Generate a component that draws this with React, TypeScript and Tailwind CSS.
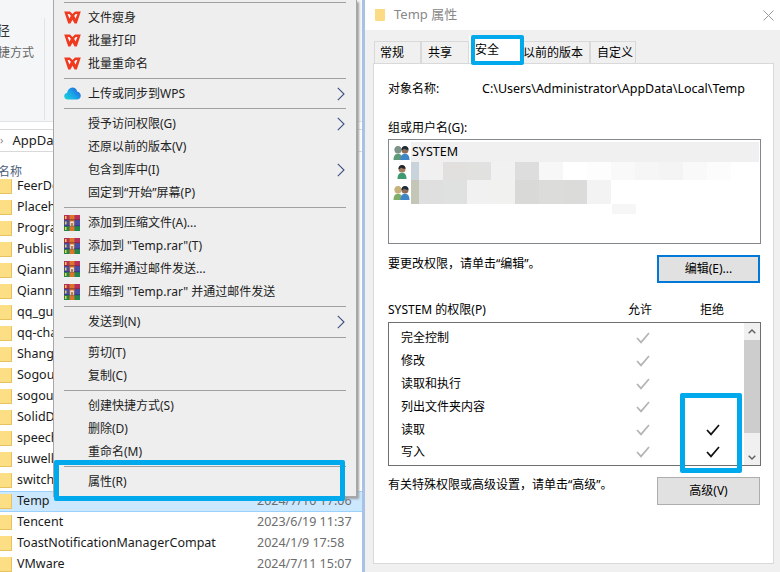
import React from "react";

const font = "font-['Noto_Sans','Noto_Sans_CJK_SC',sans-serif]";

function Wps() {
  return (
    <svg width="17" height="13" viewBox="0 0 17 13" className="shrink-0">
      <path d="M0.2 0.6H6L8.5 3L11 0.6H16.8L12.8 12.6H10.6L8.5 8.8L6.4 12.6H4.2Z" fill="#f03a20" />
      <path d="M3.6 2.9H5.2L6.8 4.8L5.5 7.5Z M13.4 2.9H11.8L10.2 4.8L11.5 7.5Z" fill="#fff" />
    </svg>
  );
}

function Cloud() {
  return (
    <svg width="17" height="13" viewBox="0 0 17 13" className="shrink-0">
      <defs>
        <linearGradient id="cl" x1="0" y1="1" x2="1" y2="0.3">
          <stop offset="0" stopColor="#1fd6d2" />
          <stop offset="0.55" stopColor="#18a4ea" />
          <stop offset="1" stopColor="#2468d8" />
        </linearGradient>
      </defs>
      <path d="M3.6 12.5C1.6 12.5 0.2 11 0.2 9.2C0.2 7.5 1.4 6.2 3 6C3.6 2.8 5.8 0.6 8.4 0.6C10.8 0.6 12.6 2.2 13.2 4.6C15.2 5 16.8 6.6 16.8 8.7C16.8 10.9 15 12.5 12.8 12.5Z" fill="url(#cl)" />
    </svg>
  );
}

function Rar() {
  return (
    <svg width="16" height="16" viewBox="0 0 16 16" className="shrink-0">
      <rect x="0" y="0" width="16" height="5" fill="#b92f5c" />
      <rect x="0" y="5" width="16" height="6" fill="#454fa8" />
      <rect x="0" y="11" width="16" height="5" fill="#23864a" />
      <rect x="5.5" y="0" width="5" height="16" fill="#d9762a" />
      <rect x="0" y="4.5" width="16" height="0.7" fill="#70243c" />
      <rect x="0" y="10.5" width="16" height="0.7" fill="#2a2f70" />
      <rect x="1" y="1" width="1.5" height="3" fill="#f3d23c" />
      <rect x="1" y="6.5" width="1.5" height="3" fill="#f3d23c" />
      <rect x="1" y="12" width="1.5" height="3" fill="#f3d23c" />
      <rect x="6.3" y="6.5" width="3.4" height="4.5" fill="#f6eee0" />
      <rect x="7.4" y="8" width="1.2" height="3" fill="#7a3a16" />
    </svg>
  );
}

function Person({ skin, hair, body }: { skin: string; hair: string; body: string }) {
  return (
    <g>
      <path d="M0.5 15C0.5 10.8 2.2 8.8 5 8.8C7.8 8.8 9.5 10.8 9.5 15Z" fill={body} />
      <circle cx="5" cy="5" r="3.5" fill={skin} />
      <path d="M1.5 5.2C1.3 2.6 3 1 5 1C7 1 8.7 2.6 8.5 4.8C6.6 4.8 5 4.2 4 3.4C3.6 4.2 2.8 5 1.5 5.2Z" fill={hair} />
    </g>
  );
}

function TwoUsers({ a, c }: { a: string; c: string }) {
  return (
    <svg width="17" height="15" viewBox="0 0 17 15" className="shrink-0">
      <Person skin={a} hair={a} body={c} />
      <g transform="translate(7,0)">
        <Person skin="#8c6f5a" hair="#1e2a36" body="#3f86c8" />
      </g>
    </svg>
  );
}

function OneUser() {
  return (
    <svg width="10" height="15" viewBox="0 0 10 15" className="shrink-0">
      <Person skin="#a97f63" hair="#20262c" body="#3f9a72" />
    </svg>
  );
}

function Chevron() {
  return (
    <svg width="8" height="14" viewBox="0 0 8 14" className="shrink-0">
      <path d="M0.8 0.8L7 7L0.8 13.2" fill="none" stroke="#3d4f84" strokeWidth="1.1" />
    </svg>
  );
}

function Check({ color }: { color: string }) {
  return (
    <svg width="14" height="12" viewBox="0 0 14 12" className="shrink-0">
      <path d="M1 6L5 10.4L13 1" fill="none" stroke={color} strokeWidth="1.7" />
    </svg>
  );
}

function Folder() {
  return (
    <div className="w-[12px] h-[15px] shrink-0 bg-[#fcdf85] border-r border-b border-[#e6c35f] rounded-br-[1px]" />
  );
}

const Sep = () => (
  <div className="h-[7px] flex items-center px-[10px]">
    <div className="h-px w-full bg-[#a0a0a0]" />
  </div>
);

function Item({ icon, label, arrow }: { icon?: React.ReactNode; label: string; arrow?: boolean }) {
  return (
    <div className="h-[23px] flex items-center pl-[10px] pr-[11px]">
      <div className="w-[24px] flex items-center">{icon}</div>
      <span className="text-[12px] text-[#222] whitespace-nowrap flex-1">{label}</span>
      {arrow ? <Chevron /> : null}
    </div>
  );
}

const files: { n: string; d?: string; sel?: boolean }[] = [
  { n: "FeerDownload" },
  { n: "Placeholder" },
  { n: "Programs" },
  { n: "Publishers" },
  { n: "Qianniu" },
  { n: "QianniuBak" },
  { n: "qq_guild" },
  { n: "qq-chat" },
  { n: "Shanghai" },
  { n: "SogouInput" },
  { n: "sogou" },
  { n: "SolidDocs" },
  { n: "speech" },
  { n: "suwell" },
  { n: "switch" },
  { n: "Temp", d: "2024/7/10 17:06", sel: true },
  { n: "Tencent", d: "2023/6/19 11:37" },
  { n: "ToastNotificationManagerCompat", d: "2024/1/9 17:58" },
  { n: "VMware", d: "2024/7/11 15:07" },
];

function Explorer() {
  return (
    <div className="w-[362px] shrink-0 flex flex-col bg-white overflow-hidden">
      <div className="h-[122px] shrink-0 bg-[#f5f6f7] border-b border-[#e2e3e4] flex">
        <div className="w-[44px] flex flex-col pt-[21px]">
          <span className="text-[13px] text-[#333] leading-[18px] -ml-[3px] w-[16px] overflow-hidden">径</span>
          <span className="text-[12px] text-[#666] leading-[18px] mt-[5px] whitespace-nowrap -ml-[2px]">捷方式</span>
        </div>
        <div className="w-px h-[102px] mt-[18px] bg-[#e2e3e4]" />
      </div>
      <div className="h-[7px] shrink-0 bg-white" />
      <div className="h-[23px] shrink-0 border-y border-[#d9d9d9] flex items-center gap-[9px] text-[13px] text-[#222]">
        <span className="text-[#888] text-[11px]">›</span>
        <span>AppData</span>
      </div>
      <div className="h-[16px] mt-[12px] -mb-[4px] shrink-0 flex items-center text-[12px] text-[#4c607a] -ml-[2px]">名称</div>
      <div className="flex flex-col">
        {files.map((f) => (
          <div
            key={f.n}
            className={
              f.sel
                ? "h-[21px] shrink-0 flex items-center bg-[#cce8ff] border-y border-[#99d1ff]"
                : "h-[21px] shrink-0 flex items-center"
            }
          >
            <Folder />
            <span className="ml-[5px] w-[240px] text-[12.5px] text-[#1a1a1a] whitespace-nowrap">{f.n}</span>
            <span className="text-[12.5px] text-[#6d6d6d] whitespace-nowrap">{f.d}</span>
          </div>
        ))}
      </div>
    </div>
  );
}

function ContextMenu() {
  return (
    <div className="absolute left-[53px] top-0 w-[304px] h-[497px] bg-[#eeeeee] border-l border-r border-b border-[#a8a8a8] shadow-[2px_2px_2px_#a0a0a0]">
      <div className="h-[6px] flex items-start pt-[2px] px-[10px]">
        <div className="h-px w-full bg-[#a0a0a0]" />
      </div>
      <Item icon={<Wps />} label="文件瘦身" />
      <Item icon={<Wps />} label="批量打印" />
      <Item icon={<Wps />} label="批量重命名" />
      <Sep />
      <Item icon={<Cloud />} label="上传或同步到WPS" arrow />
      <Sep />
      <Item label="授予访问权限(G)" arrow />
      <Item label="还原以前的版本(V)" />
      <Item label="包含到库中(I)" arrow />
      <Item label="固定到“开始”屏幕(P)" />
      <Sep />
      <Item icon={<Rar />} label="添加到压缩文件(A)..." />
      <Item icon={<Rar />} label="添加到 &quot;Temp.rar&quot;(T)" />
      <Item icon={<Rar />} label="压缩并通过邮件发送..." />
      <Item icon={<Rar />} label="压缩到 &quot;Temp.rar&quot; 并通过邮件发送" />
      <Sep />
      <Item label="发送到(N)" arrow />
      <div className="h-[8px] flex items-center px-[10px]">
        <div className="h-px w-full bg-[#a0a0a0]" />
      </div>
      <Item label="剪切(T)" />
      <Item label="复制(C)" />
      <Sep />
      <Item label="创建快捷方式(S)" />
      <Item label="删除(D)" />
      <Item label="重命名(M)" />
      <Sep />
      <Item label="属性(R)" />
    </div>
  );
}

const mosaic2 = [
  "w-[8px] bg-[#c9d3dc]",
  "w-[24px] bg-[#f0f0f0]",
  "w-[24px] bg-[#e1e0de]",
  "w-[24px] bg-[#e1e1df]",
  "w-[24px] bg-[#f1f1f1]",
  "w-[24px] bg-[#dddddd]",
  "w-[24px] bg-[#f7f7f7]",
  "w-[24px] bg-white",
  "w-[24px] bg-[#fdfdfd]",
  "w-[24px] bg-[#f9f9f9]",
  "w-[24px] bg-[#f6f6f6]",
  "w-[24px] bg-[#f4f4f4]",
  "w-[24px] bg-[#f9f9f9]",
  "w-[24px] bg-[#fcfcfc]",
];
const mosaic3 = [
  "w-[8px] bg-[#c4c7b8]",
  "w-[24px] bg-[#dfdfdf]",
  "w-[24px] bg-[#dfe1e0]",
  "w-[24px] bg-[#f1f1f1]",
  "w-[24px] bg-[#f1f1f0]",
  "w-[24px] bg-[#d9d9d7]",
  "w-[24px] bg-[#dcdcda]",
  "w-[24px] bg-[#dbdbd9]",
  "w-[24px] bg-[#f3f3f3]",
];

const perms = ["完全控制", "修改", "读取和执行", "列出文件夹内容", "读取", "写入"];
const tabs = [
  { t: "常规", c: "w-[47px] pl-[5px]" },
  { t: "共享", c: "w-[48px] pl-[6px]" },
  { t: "安全", c: "w-[53px] pl-[6px]" },
  { t: "以前的版本", c: "w-[68px] pl-0" },
  { t: "自定义", c: "w-[46px] pl-[6px]" },
];

function Dialog() {
  return (
    <div className="flex-1 flex flex-col bg-[#f0f0f0] text-[12px] text-black">
      <div className="h-[30px] shrink-0 bg-white flex items-center pl-[10px] pr-[6px]">
        <div className="w-[10px] h-[12px] bg-[#fbdc85] rounded-b-[1px]" />
        <span className="ml-[9px] text-[13px] text-[#888] flex-1">Temp 属性</span>
        <svg width="11" height="11" viewBox="0 0 11 11">
          <path d="M0.5 0.5L10.5 10.5M10.5 0.5L0.5 10.5" stroke="#9a9a9a" strokeWidth="1" />
        </svg>
      </div>
      <div className="h-[33px] shrink-0 flex items-end pl-[9px]">
        {tabs.map((t) =>
          t.t === "安全" ? (
            <div key={t.t} className={t.c + " h-[27px] bg-white flex items-center"}>
              {t.t}
            </div>
          ) : (
            <div
              key={t.t}
              className={t.c + " h-[22px] bg-[#f0f0f0] border border-b-0 border-[#d9d9d9] flex items-center whitespace-nowrap"}
            >
              {t.t}
            </div>
          )
        )}
      </div>
      <div className="ml-[8px] w-[401px] h-[501px] bg-white border border-[#d9d9d9] pl-[14px] pr-[12px] pt-[15px] flex flex-col">
        <div className="h-[20px] flex items-center">
          <span className="w-[94px] shrink-0">对象名称:</span>
          <span className="whitespace-nowrap text-[12.5px]">C:\Users\Administrator\AppData\Local\Temp</span>
        </div>
        <div className="h-[20px] mt-[19px] flex items-center">组或用户名(G):</div>
        <div className="h-[105px] mt-[1px] border border-[#828790] pt-[2px] px-[1px] flex flex-col">
          <div className="h-[20px] flex items-center">
            <div className="w-[21px] flex items-center pl-[3px]">
              <TwoUsers a="#7d9488" c="#5f9a78" />
            </div>
            <div className="flex-1 h-full bg-[#f0f0f0] flex items-center text-[12.5px]">
              <span className="ml-[1px]">SYSTEM</span>
            </div>
          </div>
          <div className="h-[18px] flex items-center">
            <div className="w-[21px] pl-[7px] flex items-center">
              <OneUser />
            </div>
            <div className="flex h-full">
              {mosaic2.map((c, i) => (
                <div key={i} className={c} />
              ))}
            </div>
          </div>
          <div className="h-[24px] flex items-center">
            <div className="w-[21px] pl-[3px] flex items-center">
              <TwoUsers a="#c7b27c" c="#7fae6a" />
            </div>
            <div className="flex h-full">
              {mosaic3.map((c, i) => (
                <div key={i} className={c} />
              ))}
            </div>
          </div>
          <div className="h-[10px] ml-[222px] w-[24px] bg-[#f6f6f6]" />
        </div>
        <div className="mt-[11px] flex items-start justify-between pr-[1px]">
          <span>要更改权限，请单击“编辑”。</span>
          <div className="w-[103px] h-[28px] border-2 border-[#0078d7] bg-[#e1e1e1] flex items-center justify-center">
            编辑(E)...
          </div>
        </div>
        <div className="h-[20px] mt-[17px] flex items-center">
          <span className="w-[240px] shrink-0 whitespace-nowrap">SYSTEM 的权限(P)</span>
          <span className="w-[72px] shrink-0">允许</span>
          <span>拒绝</span>
        </div>
        <div className="h-[144px] mt-[2px] border border-[#6f6f6f] flex">
          <div className="flex-1 pt-[4px] pl-[12px]">
            {perms.map((p, i) => (
              <div key={p} className="h-[22.8px] flex items-center">
                <span className="w-[230px] shrink-0">{p}</span>
                <div className="w-[24px] flex justify-center">
                  <Check color="#b4b4b4" />
                </div>
                {i >= 4 ? (
                  <div className="ml-[46px] w-[24px] flex justify-center">
                    <Check color="#111111" />
                  </div>
                ) : null}
              </div>
            ))}
          </div>
          <div className="w-[16px] shrink-0 bg-[#f0f0f0] flex flex-col items-center">
            <div className="h-[17px] flex items-center">
              <svg width="8" height="5" viewBox="0 0 8 5">
                <path d="M0.7 4.3L4 1L7.3 4.3" fill="none" stroke="#606060" strokeWidth="1.4" />
              </svg>
            </div>
            <div className="w-full h-[93px] bg-[#cdcdcd]" />
            <div className="flex-1 flex items-end pb-[5px]">
              <svg width="8" height="5" viewBox="0 0 8 5">
                <path d="M0.7 0.7L4 4L7.3 0.7" fill="none" stroke="#606060" strokeWidth="1.4" />
              </svg>
            </div>
          </div>
        </div>
        <div className="mt-[11px] flex items-start justify-between pr-[1px]">
          <span className="-mt-[1px]">有关特殊权限或高级设置，请单击“高级”。</span>
          <div className="w-[103px] h-[28px] border border-[#adadad] bg-[#e1e1e1] flex items-center justify-center">
            高级(V)
          </div>
        </div>
      </div>
    </div>
  );
}

export default function App() {
  return (
    <div className={"relative w-[780px] h-[572px] overflow-hidden flex bg-white " + font}>
      <Explorer />
      <div className="w-[3px] shrink-0 bg-[#a9c1e4]" />
      <Dialog />
      <ContextMenu />
      <div className="absolute left-[54px] top-[460px] w-[291px] h-[41px] border-[5px] border-[#00a8ec] rounded-[2px]" />
      <div className="absolute left-[471px] top-[35px] w-[53px] h-[30px] border-[4px] border-[#00a8ec] rounded-[2px]" />
      <div className="absolute left-[680px] top-[393px] w-[62px] h-[80px] border-[5px] border-[#00a8ec] rounded-[2px]" />
    </div>
  );
}
